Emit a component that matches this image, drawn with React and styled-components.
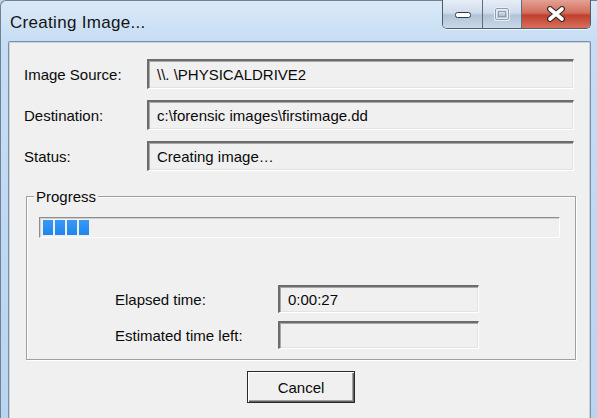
import styled, { createGlobalStyle } from "styled-components";

const GlobalStyle = createGlobalStyle`
  html, body {
    margin: 0;
    padding: 0;
    overflow: hidden;
    background: #bcd7f2;
  }
`;

const Window = styled.div`
  width: 597px;
  height: 430px;
  box-sizing: border-box;
  display: flex;
  flex-direction: column;
  background: linear-gradient(180deg, #dae9f8 0%, #c6ddf4 40px, #b9d4f0 100%);
  border-top: 1px solid #6f8195;
  border-left: 1px solid #6f8195;
  border-radius: 6px 0 0 0;
  font-family: "Liberation Sans", Arial, sans-serif;
`;

const TitleBar = styled.div`
  height: 40px;
  display: flex;
  align-items: flex-start;
  justify-content: space-between;
  padding-left: 9px;
`;

const Title = styled.div`
  font-size: 17px;
  color: #141414;
  margin-top: 12px;
  letter-spacing: 0.3px;
`;

const CaptionButtons = styled.div`
  display: flex;
  margin-top: -1px;
  margin-right: 6px;
  border: 1px solid #4d5c6e;
  border-top: none;
  border-radius: 0 0 5px 5px;
  overflow: hidden;
  height: 28px;
  box-shadow: 0 1px 0 rgba(255, 255, 255, 0.7);
`;

const CaptionButton = styled.div`
  width: ${({ w }) => w}px;
  height: 100%;
  display: flex;
  align-items: center;
  justify-content: center;
  border-left: ${({ first }) => (first ? "none" : "1px solid #5e6c7c")};
  background: ${({ close }) =>
    close
      ? "linear-gradient(180deg, #e4a194 0%, #d26f5e 45%, #c0402d 55%, #d7705c 100%)"
      : "linear-gradient(180deg, #e6eef7 0%, #cfdcea 45%, #b1c3d8 55%, #c9d9ea 100%)"};
`;

const Client = styled.div`
  flex: 1;
  margin: 0 6px 0 7px;
  background: #f0f0f0;
  border: 1px solid #7d8fa4;
  border-bottom: none;
  border-radius: 2px 2px 0 0;
  box-shadow: inset 1px 1px 0 #c9d3de, inset -1px 0 0 #c9d3de;
  padding: 17px 16px 0 15px;
`;

const FieldGrid = styled.div`
  display: grid;
  grid-template-columns: ${({ cols }) => cols};
  grid-auto-rows: ${({ row }) => row}px;
  row-gap: ${({ gap }) => gap}px;
  align-items: center;
  margin-left: ${({ indent }) => indent || 0}px;
`;

const Label = styled.div`
  font-size: 15px;
  color: #0a0a0a;
`;

const Field = styled.div`
  height: 100%;
  box-sizing: border-box;
  display: flex;
  align-items: center;
  padding-left: 8px;
  font-size: 15px;
  color: #0a0a0a;
  background: #f0f0f0;
  border-top: 2px solid #6c6c6c;
  border-left: 2px solid #6c6c6c;
  border-right: 1px solid #ffffff;
  border-bottom: 1px solid #ffffff;
  box-shadow: inset 1px 1px 0 #a8a8a8, inset -1px -1px 0 #e3e3e3;
  white-space: nowrap;
`;

const Group = styled.fieldset`
  margin: 17px -2px 0 2px;
  padding: 0 15px 10px 12px;
  border: 1px solid #a0a0a0;
  box-shadow: inset 1px 1px 0 #ffffff, 1px 1px 0 #ffffff;
`;

const Legend = styled.legend`
  font-size: 15px;
  color: #0a0a0a;
  padding: 0 2px;
  margin-left: -5px;
  background: #f0f0f0;
`;

const ProgressTrack = styled.div`
  height: 21px;
  box-sizing: border-box;
  margin-top: 12px;
  margin-bottom: 47px;
  display: flex;
  align-items: center;
  gap: 2px;
  padding-left: 3px;
  background: #f0f0f0;
  border-top: 1px solid #8d8d8d;
  border-left: 1px solid #8d8d8d;
  border-right: 1px solid #ffffff;
  border-bottom: 1px solid #ffffff;
  box-shadow: inset 1px 1px 0 #d0d0d0;
`;

const Chunk = styled.div`
  width: 10px;
  height: 15px;
  background: linear-gradient(180deg, #3a98f5, #1f86ee);
`;

const ButtonRow = styled.div`
  display: flex;
  justify-content: center;
  padding-top: 11px;
  padding-left: 4px;
`;

const Button = styled.button`
  width: 108px;
  height: 32px;
  font-family: "Liberation Sans", Arial, sans-serif;
  font-size: 15px;
  color: #0a0a0a;
  background: #f0f0f0;
  border: 1px solid #2a2a2a;
  border-radius: 0;
  box-shadow: inset 1px 1px 0 #ffffff, inset -1px -1px 0 #5f5f5f,
    inset -2px -2px 0 #a0a0a0;
  padding: 0;
`;

const MinIcon = () => (
  <svg width="18" height="10" viewBox="0 0 18 10">
    <rect x="1.5" y="3.5" width="15" height="5" rx="2" fill="#fff" stroke="#2e3a48" />
  </svg>
);

const MaxIcon = () => (
  <svg width="16" height="14" viewBox="0 0 16 14">
    <rect x="1.5" y="1.5" width="13" height="11" rx="1.5" fill="none" stroke="#e9eef4" strokeWidth="3" />
    <rect x="1.5" y="1.5" width="13" height="11" rx="1.5" fill="none" stroke="#8e9cac" strokeWidth="1" />
    <rect x="4.5" y="4.5" width="7" height="5" fill="none" stroke="#8e9cac" strokeWidth="1" />
  </svg>
);

const CloseIcon = () => (
  <svg width="22" height="16" viewBox="0 0 22 16">
    <path d="M5 3 L17 13 M17 3 L5 13" stroke="#3b2b2b" strokeWidth="6" strokeLinecap="round" />
    <path d="M5 3 L17 13 M17 3 L5 13" stroke="#ffffff" strokeWidth="3.6" strokeLinecap="round" />
  </svg>
);

const App = () => (
  <>
    <GlobalStyle />
    <Window>
      <TitleBar>
        <Title>Creating Image...</Title>
        <CaptionButtons>
          <CaptionButton w={39} first>
            <MinIcon />
          </CaptionButton>
          <CaptionButton w={38}>
            <MaxIcon />
          </CaptionButton>
          <CaptionButton w={68} close>
            <CloseIcon />
          </CaptionButton>
        </CaptionButtons>
      </TitleBar>
      <Client>
        <FieldGrid cols="123px 1fr" row={30} gap={11}>
          <Label>Image Source:</Label>
          <Field>\\. \PHYSICALDRIVE2</Field>
          <Label>Destination:</Label>
          <Field>c:\forensic images\firstimage.dd</Field>
          <Label>Status:</Label>
          <Field>Creating image…</Field>
        </FieldGrid>
        <Group>
          <Legend>Progress</Legend>
          <ProgressTrack>
            {[0, 1, 2, 3].map(i => (
              <Chunk key={i} />
            ))}
          </ProgressTrack>
          <FieldGrid cols="163px 201px" row={28} gap={8} indent={76}>
            <Label>Elapsed time:</Label>
            <Field>0:00:27</Field>
            <Label>Estimated time left:</Label>
            <Field />
          </FieldGrid>
        </Group>
        <ButtonRow>
          <Button type="button">Cancel</Button>
        </ButtonRow>
      </Client>
    </Window>
  </>
);

export default App;
